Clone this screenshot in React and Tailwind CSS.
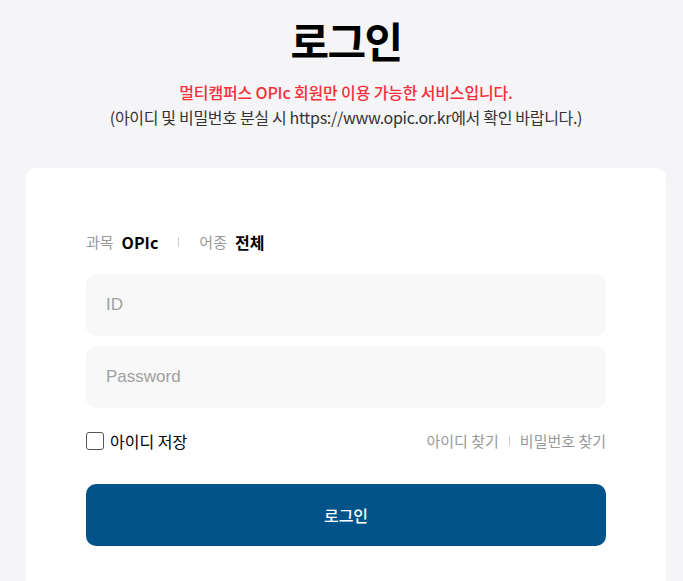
import { useState } from "react";

const KR_FONT = { fontFamily: '"Noto Sans CJK KR", "Noto Sans", sans-serif' };

function TabInfo() {
  return (
    <div className="flex items-center leading-[20px]">
      <span className="text-[15px] text-[#999]">과목</span>
      <span className="ml-[8px] text-[16px] font-bold text-black">OPIc</span>
      <span className="mx-[20px] h-[10px] w-px bg-[#ccc]" />
      <span className="text-[15px] text-[#999]">어종</span>
      <span className="ml-[8px] text-[16px] font-bold text-black">전체</span>
    </div>
  );
}

function Field({ placeholder, type = "text" }) {
  return (
    <input
      className="h-[62px] w-full rounded-[10px] bg-[#f8f8f8] px-[20px] text-[17px] text-black outline-none placeholder:text-[#a0a0a0]"
      placeholder={placeholder}
      style={{ fontFamily: '"Liberation Sans", Arial, sans-serif' }}
      type={type}
    />
  );
}

export default function App() {
  const [saveId, setSaveId] = useState(false);

  return (
    <div className="min-h-[581px] bg-[#f5f5f7] pt-[14px]" style={KR_FONT}>
      <div className="ml-[26px] w-[640px]">
        <h1 className="text-center text-[42px] font-bold leading-[52px] tracking-[-0.04em] text-black">로그인</h1>
        <div className="mt-[14px] text-center text-[16px] leading-[25px]">
          <p className="font-medium tracking-[-0.01em] text-[#f5303c]">멀티캠퍼스 OPIc 회원만 이용 가능한 서비스입니다.</p>
          <p className="tracking-[-0.02em] text-[#333]">(아이디 및 비밀번호 분실 시 https://www.opic.or.kr에서 확인 바랍니다.)</p>
        </div>

        <div className="mt-[38px] rounded-t-[10px] bg-white px-[60px] pb-[40px] pt-[64px]">
          <TabInfo />

          <div className="mt-[22px] flex flex-col gap-[10px]">
            <Field placeholder="ID" />
            <Field placeholder="Password" type="password" />
          </div>

          <div className="mt-[23px] flex items-center justify-between">
            <label className="flex cursor-pointer items-center gap-[6px] text-[16px] leading-[20px] text-black">
              <input
                checked={saveId}
                className="h-[18px] w-[18px] appearance-none rounded-[3px] border border-[#555] bg-white checked:bg-[#02538a]"
                onChange={(e) => setSaveId(e.target.checked)}
                type="checkbox"
              />
              아이디 저장
            </label>
            <div className="flex items-center text-[15px] leading-[20px] text-[#999]">
              <a href="#">아이디 찾기</a>
              <span className="mx-[10px] h-[10px] w-px bg-[#ccc]" />
              <a href="#">비밀번호 찾기</a>
            </div>
          </div>

          <button
            className="mt-[33px] h-[62px] w-full rounded-[10px] bg-[#02538a] text-[16px] font-medium text-white"
            type="button"
          >
            로그인
          </button>
        </div>
      </div>
    </div>
  );
}
